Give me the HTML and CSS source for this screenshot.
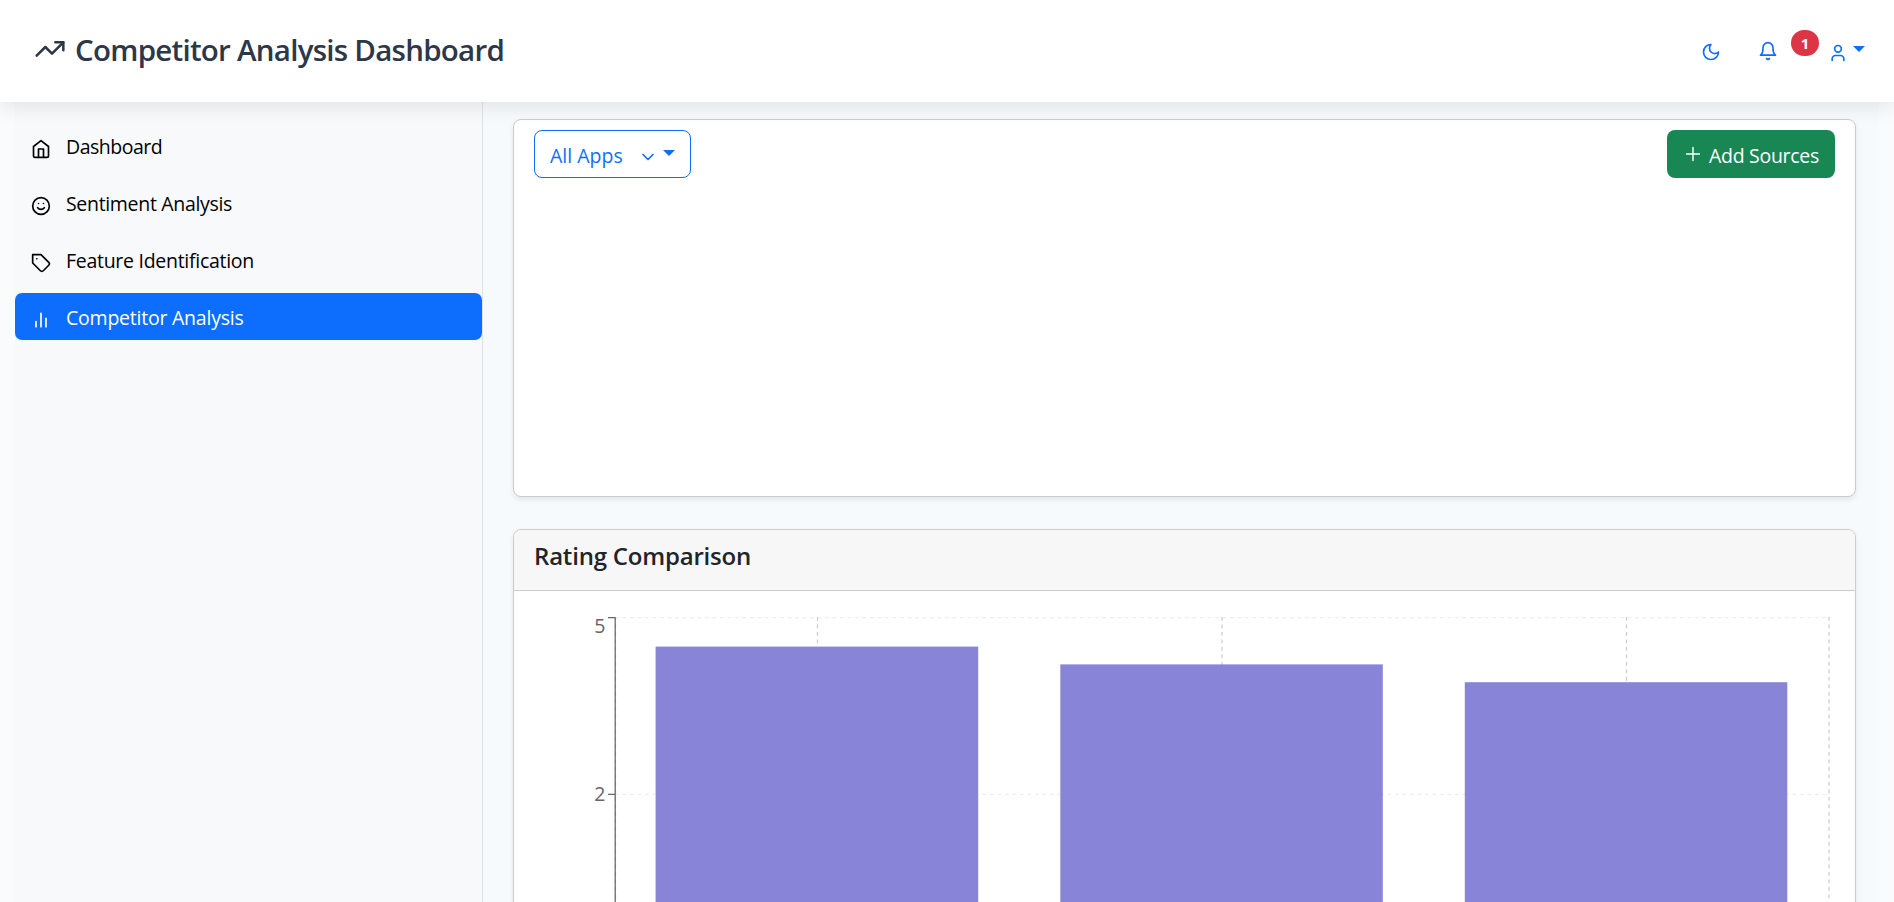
FILE: index.html
```html
<!DOCTYPE html>
<html lang="en">
<head>
<meta charset="utf-8">
<title>Competitor Analysis Dashboard</title>
<link rel="stylesheet" href="styles.css">
</head>
<body>
<header class="topbar">
  <h1 class="brand">
    <svg class="brand-icon" viewBox="0 0 24 24"><polyline points="22 7 13.5 15.5 8.5 10.5 2 17"/><polyline points="16 7 22 7 22 13"/></svg>
    <span class="brand-text">Competitor Analysis Dashboard</span>
  </h1>
  <div class="actions">
    <svg class="icon moon" viewBox="0 0 24 24"><path d="M12 3a6 6 0 0 0 9 9 9 9 0 1 1-9-9Z"/></svg>
    <svg class="icon bell" viewBox="0 0 24 24"><path d="M6 8a6 6 0 0 1 12 0c0 7 3 9 3 9H3s3-2 3-9"/><path d="M10.3 21a1.94 1.94 0 0 0 3.4 0"/></svg>
    <span class="badge">1</span>
    <svg class="icon user" viewBox="0 0 24 24"><path d="M19 21v-2a4 4 0 0 0-4-4H9a4 4 0 0 0-4 4v2"/><circle cx="12" cy="7" r="4"/></svg>
    <span class="caret"></span>
  </div>
</header>
<div class="layout">
  <nav class="sidebar">
    <a class="nav-link"><svg class="icon" viewBox="0 0 24 24"><path d="m3 9 9-7 9 7v11a2 2 0 0 1-2 2H5a2 2 0 0 1-2-2z"/><polyline points="9 22 9 12 15 12 15 22"/></svg><span class="t-dash">Dashboard</span></a>
    <a class="nav-link"><svg class="icon" viewBox="0 0 24 24"><circle cx="12" cy="12" r="10"/><path d="M8 14s1.500 2 4 2 4-2 4-2"/><path d="M9 9h.01M15 9h.01"/></svg><span class="t-sent">Sentiment Analysis</span></a>
    <a class="nav-link"><svg class="icon" viewBox="0 0 24 24"><path d="M12 2H2v10l9.290 9.290c.94.94 2.480.94 3.420 0l6.580-6.580c.94-.94.94-2.480 0-3.420L12 2Z"/><path d="M7 7h.01"/></svg><span class="t-feat">Feature Identification</span></a>
    <a class="nav-link active"><svg class="icon" viewBox="0 0 24 24"><path d="M18 20V10M12 20V4M6 20v-6"/></svg><span class="t-comp">Competitor Analysis</span></a>
  </nav>
  <main class="main">
    <section class="card filters">
      <button class="btn outline"><span class="t-apps">All Apps</span><svg class="chevron" viewBox="0 0 24 24"><path d="m6 9 6 6 6-6"/></svg><span class="caret"></span></button>
      <button class="btn success"><svg class="plus" viewBox="0 0 24 24"><path d="M5 12h14M12 5v14"/></svg><span class="t-add">Add Sources</span></button>
    </section>
    <section class="card">
      <h2 class="card-header"><span class="t-rating">Rating Comparison</span></h2>
      <svg class="chart" width="1341" height="400" viewBox="514 591 1341 400">
        <g class="grid-h"><path d="M615 617.500H1829"/><path d="M615 794.300H1829"/></g>
        <g class="grid-v"><path d="M615.500 617V960M817.500 617V960M1222 617V960M1626.500 617V960M1829 617V960"/></g>
        <path class="axis" d="M608 617.500H615.200V960M608 794.300H615"/>
        <g class="ticks"><text x="605.500" y="633">5</text><text x="605.500" y="801">2</text></g>
        <g class="bars"><rect x="655.600" y="646.600" width="322.600" height="330"/><rect x="1060.300" y="664.400" width="322.500" height="330"/><rect x="1464.800" y="682.200" width="322.500" height="330"/></g>
      </svg>
    </section>
  </main>
</div>
</body>
</html>
```
FILE: styles.css
```css
* { box-sizing: border-box; }
body {
  margin: 0;
  height: 902px;
  overflow: hidden;
  background: #f9fbfd;
  font-family: "Open Sans", "Noto Sans", sans-serif;
  font-size: 19.5px;
  color: #212529;
}
svg { fill: none; stroke: currentColor; stroke-width: 2; stroke-linecap: round; stroke-linejoin: round; flex: none; }
span { white-space: nowrap; }
.topbar {
  position: relative;
  z-index: 2;
  display: flex;
  justify-content: space-between;
  height: 102px;
  background: #fff;
  box-shadow: 0 5px 19px rgba(0, 0, 0, .09);
}
.brand { display: flex; margin: 0; padding: 30px 0 0 34px; font-size: 29.5px; line-height: 40px; font-weight: 600; color: #2d3748; }
.brand-icon { width: 32px; height: 32px; margin: 3px 9px 0 0; stroke-width: 1.9; }
.brand-text { letter-spacing: -.74px; }
.actions { display: flex; align-items: flex-start; padding-right: 29px; color: #0d6efd; }
.icon { width: 20px; height: 20px; }
.moon { margin: 42px 37px 0 0; }
.bell { margin: 41px 13px 0 0; }
.badge { margin: 30px 9px 0 0; width: 28px; height: 26px; border-radius: 13px; background: #dc3545; color: #fff; font-size: 15px; line-height: 27px; font-weight: 700; text-align: center; }
.user { margin: 43px 5px 0 0; }
.caret { width: 12px; border: 6px solid transparent; border-top-color: currentColor; border-bottom: 0; }
.actions .caret { margin-top: 46px; }
.layout { display: flex; height: 800px; padding: 0 15px; overflow: hidden; }
.sidebar { width: 468px; padding-top: 20px; background: #f8f9fb; border-right: 1px solid #dee2e6; }
.nav-link { display: flex; height: 47px; margin-bottom: 10px; padding: 10px 16px; line-height: 29px; border-radius: 7px; color: #000; }
.nav-link .icon { margin: 7px 15px 0 0; }
.t-dash { letter-spacing: -.5px; }
.t-sent { letter-spacing: -.32px; }
.t-feat { letter-spacing: -.28px; }
.t-comp { letter-spacing: -.23px; }
.t-add { letter-spacing: -.3px; }
.t-rating { letter-spacing: -.2px; }
.active { background: #0d6efd; color: #fff; }
.main { flex: 1; padding: 17px 23px 0 30px; background: #f6fafd; }
.card { width: 1343px; margin-bottom: 32px; background: #fff; border: 1px solid #ccc; border-radius: 8px; box-shadow: 0 2.500px 5px rgba(0, 0, 0, .075); overflow: hidden; }
.filters { display: flex; justify-content: space-between; align-items: flex-start; height: 378px; padding: 10px 20px; }
.btn { display: flex; height: 48px; padding: 0; font: inherit; line-height: 50px; border: 0; border-radius: 8px; }
.outline { width: 157px; padding-left: 15px; background: #fff; color: #0d6efd; border: 1px solid #0d6efd; }
.chevron { width: 20px; height: 20px; margin: 16px 5px 0 15px; }
.outline .caret { margin-top: 19px; }
.success { width: 168px; padding-left: 15px; background: #198754; color: #fff; line-height: 52px; }
.plus { width: 22px; height: 22px; margin: 13px 5px 0 0; stroke-width: 1.600; }
.card-header { height: 61px; margin: 0; padding: 10px 20px; background: #f7f7f7; border-bottom: 1px solid #ccc; font-size: 24px; line-height: 32px; font-weight: 600; }
.chart { display: block; stroke: none; }
.grid-h { stroke: #eee; stroke-width: 1.250; stroke-dasharray: 3.750 3.750; stroke-linecap: butt; }
.grid-v { stroke: #ccc; stroke-width: 1.250; stroke-dasharray: 3.750 3.750; stroke-linecap: butt; }
.axis { stroke: #666; stroke-width: 1.250; stroke-linecap: butt; }
.ticks { fill: #666; font-size: 19.500px; text-anchor: end; }
.bars { fill: #8884d8; }
```
